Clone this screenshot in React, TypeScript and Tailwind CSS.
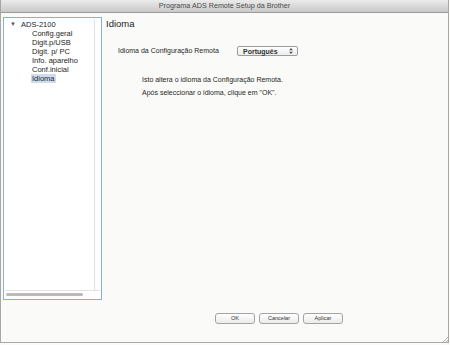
import React from "react";

const items = ["Config.geral", "Digit.p/USB", "Digit. p/ PC", "Info. aparelho", "Conf.inicial", "Idioma"];

function Btn({ label }: { label: string }) {
  return (
    <button
      type="button"
      className="flex h-[11px] w-[40px] items-center justify-center rounded-[3px] border border-[#a3a3a3] bg-gradient-to-b from-white to-[#ebebeb] text-[5.5px] leading-none text-[#333]"
    >
      {label}
    </button>
  );
}

export default function App() {
  return (
    <div
      className="relative h-[345px] w-[450px] overflow-hidden bg-[#fafbf9] text-[#1e1e1e]"
      style={{ fontFamily: '"Liberation Sans", Arial, sans-serif' }}
    >
      <div className="flex h-[343px] w-[449px] flex-col border-r border-l border-b border-[#a9a6a3]">
        {/* title bar */}
        <div className="flex h-[13px] shrink-0 items-center justify-center border-b border-[#9b9b9b] bg-gradient-to-b from-[#ebebeb] to-[#c9c9c9] text-[7.2px] leading-none text-[#4b4b4b]">
          Programa ADS Remote Setup da Brother
        </div>

        <div className="flex flex-1">
          {/* sidebar */}
          <div className="ml-[2px] mt-[4px] flex h-[283px] w-[99px] shrink-0 flex-col border border-[#8eaed6] bg-white p-px">
            <div className="flex flex-1 border-b border-[#e3e3e3]">
              <div className="flex-1 border-r border-[#e3e3e3] pt-[1px] text-[7.5px] leading-[9px]">
                <div className="flex items-center">
                  <span className="ml-[5px] w-[11px] text-[6px] text-[#555]">▼</span>
                  <span>ADS-2100</span>
                </div>
                {items.map((it) => (
                  <div key={it} className="pl-[26px]">
                    <span className={it === "Idioma" ? "bg-[#cfdcf0] px-[1px]" : "px-[1px]"}>{it}</span>
                  </div>
                ))}
              </div>
              <div className="w-[5px]" />
            </div>
            <div className="flex h-[7px] items-center px-[1px]">
              <div className="h-[3px] w-[77px] rounded-full bg-[#bdb9b6]" />
            </div>
          </div>

          {/* content */}
          <div className="flex flex-1 flex-col pl-[4px]">
            <div className="mt-[5px] text-[9.5px] leading-[11px]">Idioma</div>
            <div className="mt-[17px] flex items-center text-[7px]">
              <span className="ml-[12px] w-[119px]">Idioma da Configuração Remota</span>
              <div className="flex h-[10px] w-[61px] items-center justify-between rounded-[2px] border border-[#9c9c9c] bg-gradient-to-b from-white to-[#ececec] pl-[5px] pr-[4px] text-[7px] font-bold leading-none text-[#333]">
                <span>Português</span>
                <svg width="4" height="6" viewBox="0 0 4 6">
                  <path d="M0 2.3 L2 0 L4 2.3 Z M0 3.7 L2 6 L4 3.7 Z" fill="#555" />
                </svg>
              </div>
            </div>
            <div className="ml-[36px] mt-[16px] text-[7px] leading-[13px]">
              <div>Isto altera o idioma da Configuração Remota.</div>
              <div>Após seleccionar o idioma, clique em "OK".</div>
            </div>
            <div className="mt-auto mb-[18px] ml-[109px] flex gap-[4px]">
              <Btn label="OK" />
              <Btn label="Cancelar" />
              <Btn label="Aplicar" />
            </div>
          </div>
        </div>
      </div>
      {/* resize grip */}
      <svg className="absolute bottom-[2px] right-[2px]" width="7" height="7" viewBox="0 0 7 7">
        <path d="M1 7 L7 1 M4 7 L7 4" stroke="#a0a0a0" strokeWidth="0.8" />
      </svg>
    </div>
  );
}
